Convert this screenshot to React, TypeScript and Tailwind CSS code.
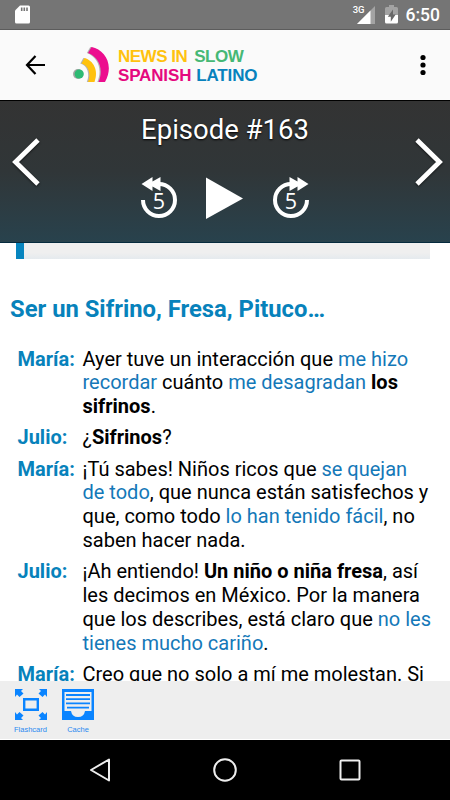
import type { ReactNode } from "react";

type Line = { speaker: string; text: ReactNode };

function Vocab({ children }: { children: ReactNode }) {
  return <span className="text-[#1478b8]">{children}</span>;
}

const DIALOG: Line[] = [
  {
    speaker: "María:",
    text: (
      <>
        Ayer tuve un interacción que <Vocab>me hizo<br />recordar</Vocab> cuánto{" "}
        <Vocab>me desagradan</Vocab> <b>los<br />sifrinos</b>.
      </>
    ),
  },
  { speaker: "Julio:", text: <>¿<b>Sifrinos</b>?</> },
  {
    speaker: "María:",
    text: (
      <>
        ¡Tú sabes! Niños ricos que <Vocab>se quejan<br />de todo</Vocab>, que nunca están satisfechos y<br />
        que, como todo <Vocab>lo han tenido fácil</Vocab>, no<br />saben hacer nada.
      </>
    ),
  },
  {
    speaker: "Julio:",
    text: (
      <>
        ¡Ah entiendo! <b>Un niño o niña fresa</b>, así<br />les decimos en México. Por la manera<br />
        que los describes, está claro que <Vocab>no les<br />tienes mucho cariño</Vocab>.
      </>
    ),
  },
  { speaker: "María:", text: <>Creo que no solo a mí me molestan. Si</> },
];

function StatusBar() {
  return (
    <div className="flex h-[30px] shrink-0 items-center border-b border-[#5c5c5c] bg-[#757575] pl-[15px] pr-[10px] text-white">
      <svg width="15" height="19" viewBox="0 0 15 19">
        <path d="M5 .5h8.5A1.5 1.5 0 0 1 15 2v15a1.5 1.5 0 0 1-1.5 1.5h-12A1.5 1.5 0 0 1 0 17V5.500z" fill="#fff" />
        <path d="M6.700 2.500v3.500M9.300 2.500v3.500M12 2.500v3.500" stroke="#757575" strokeWidth="1.600" />
      </svg>
      <span className="ml-auto mb-[9px] text-[9.500px] font-medium leading-none">3G</span>
      <svg className="-ml-[8px]" width="18" height="18" viewBox="0 0 18 18">
        <path d="M18 0v18H0z" fill="#a3a3a3" />
        <path d="M13.500 4.500V18H0z" fill="#fff" />
      </svg>
      <svg className="ml-[10px]" width="13" height="19" viewBox="0 0 13 19">
        <path d="M4 0h5v2h2.500Q13 2 13 3.500V10H0V3.500Q0 2 1.500 2H4z" fill="#a3a3a3" />
        <path d="M0 10h13v7q0 1.500-1.500 1.500h-10Q0 18.500 0 17z" fill="#fff" />
        <path d="M8 4.500 2.800 11.800h3V16.800L10.700 9.500H8z" fill="#686868" />
      </svg>
      <span className="ml-[8px] mt-[2px] text-[17.500px] font-medium leading-none">6:50</span>
    </div>
  );
}

function Logo() {
  return (
    <div className="flex">
      <svg width="38" height="38" viewBox="0 0 38 38">
        <g opacity=".35" fill="#333" transform="translate(-1.200 0)">
          <path d="M8.500 18.500 11.500 13C20.500 15.500 26 25.500 21.500 37H15C18.500 29 15.500 20.500 8.500 18.500z" />
          <path d="M15 8 18.500 2C32 4.500 41.500 20 32 37H25.500C31 24.500 26 12 15 8z" />
        </g>
        <circle cx="5" cy="29" r="5" fill="#a4a4a4" />
        <circle cx="6.200" cy="29" r="4.600" fill="#2dba73" />
        <path d="M8.500 18.500 11.500 13C20.500 15.500 26 25.500 21.500 37H15C18.500 29 15.500 20.500 8.500 18.500z" fill="#ffc20e" />
        <path d="M15 8 18.500 2C32 4.500 41.500 20 32 37H25.500C31 24.500 26 12 15 8z" fill="#ec0d8e" />
      </svg>
      <div className="ml-[7px] mt-[3.500px] whitespace-nowrap font-['Liberation_Sans'] text-[17px] font-bold leading-[18.500px]">
        <div className="tracking-[-0.5px]">
          <span className="text-[#ffc20e]">NEWS IN</span>
          <span className="ml-[7px] text-[#46b875]">SLOW</span>
        </div>
        <div className="tracking-[-0.15px]">
          <span className="text-[#e5087e]">SPANISH</span>
          <span className="ml-[5px] text-[#0782bd]">LATINO</span>
        </div>
      </div>
    </div>
  );
}

function AppBar() {
  return (
    <div className="flex h-[70px] shrink-0 items-center bg-[#fafafa] pl-[25px] pr-[24.500px]">
      <svg width="21" height="20" viewBox="0 0 21 20" fill="none" stroke="#000" strokeWidth="2.200">
        <path d="M10.500 1 2 10l8.500 9M2 10h18" />
      </svg>
      <div className="ml-[27px]">
        <Logo />
      </div>
      <svg className="ml-auto" width="6" height="22" viewBox="0 0 6 22">
        <circle cx="3" cy="3.500" r="2.600" />
        <circle cx="3" cy="11" r="2.600" />
        <circle cx="3" cy="18.500" r="2.600" />
      </svg>
    </div>
  );
}

function Skip({ forward = false }: { forward?: boolean }) {
  return (
    <svg width="38" height="44" viewBox="0 0 38 44">
      <g transform={forward ? "translate(38 0) scale(-1 1)" : undefined}>
        <path d="M3 25A16 16 0 1 0 19 9" fill="none" stroke="#fff" strokeWidth="4" />
        <path d="M1.500 9 12.500 2v4.500L20.500 2v14l-8-4.500v4.500z" fill="#fff" />
      </g>
      <text x="19" y="33.500" textAnchor="middle" fill="#fff" fontFamily="Open Sans" fontSize="21.500">5</text>
    </svg>
  );
}

function Player() {
  return (
    <div className="flex h-[143px] shrink-0 justify-between border-b border-t border-b-[#062b3e] border-t-black bg-linear-to-b from-[#333] via-[#303638] to-[#28424d] pl-[12px] pr-[7px]">
      <svg className="mt-[36px] drop-shadow-[0_1px_1px_rgba(0,0,0,0.6)]" width="28" height="50" viewBox="0 0 28 50" fill="none" stroke="#fff" strokeWidth="4.800">
        <path d="M26 3 3.500 25 26 47" />
      </svg>
      <div className="-ml-[5px] flex flex-col items-center">
        <h1 className="mt-[12px] whitespace-nowrap text-[27.500px] leading-[34px] text-white [text-shadow:0_1px_2px_#000]">Episode #163</h1>
        <div className="mt-[28px] flex items-center">
          <Skip />
          <svg className="ml-[28px] mr-[29px]" width="37" height="44" viewBox="0 0 37 44">
            <path d="M0 2.500v41.500L37 23.500z" fill="#fff" />
          </svg>
          <Skip forward />
        </div>
      </div>
      <svg className="mt-[36px] drop-shadow-[0_1px_1px_rgba(0,0,0,0.6)]" width="28" height="50" viewBox="0 0 28 50" fill="none" stroke="#fff" strokeWidth="4.800">
        <path d="M2 3 24.500 25 2 47" />
      </svg>
    </div>
  );
}

function Transcript() {
  return (
    <div className="min-h-0 flex-1 overflow-hidden bg-white">
      <div className="ml-[16px] flex h-[16px] w-[414px] bg-linear-to-b from-[#efefef] from-60% to-[#e5eaee]">
        <div className="w-[8px] bg-[#0785bf]" />
      </div>
      <h2 className="ml-[10px] mt-[35px] whitespace-nowrap text-[23.800px] font-bold leading-[30px] text-[#0782bb]">
        Ser un Sifrino, Fresa, Pituco…
      </h2>
      <div className="mt-[23.500px] flex flex-col gap-[7.500px] whitespace-nowrap text-[20px] leading-[23.800px]">
        {DIALOG.map((line, i) => (
          <div key={i} className="flex">
            <div className="ml-[17.500px] w-[65px] shrink-0 font-bold text-[#0782bb]">{line.speaker}</div>
            <p>{line.text}</p>
          </div>
        ))}
      </div>
    </div>
  );
}

function Toolbar() {
  return (
    <div className="flex h-[59px] shrink-0 gap-[15px] border-b border-white bg-[#eee] pl-[14px] pt-[8px] font-['Liberation_Sans'] text-[7.500px] leading-[9px] text-[#2b8af0]">
      <div className="flex w-[33px] flex-col items-center">
        <svg width="32" height="31" viewBox="0 0 32 31" fill="#0a84ff">
          <path d="M0 0h8L6 2l2.500 2.500L4.500 8 2 5.500 0 8zM32 0h-8l2 2-2.500 2.500 4 3.500L30 5.500 32 8zM0 31h8l-2-2 2.500-2.500-4-3.500L2 25.500 0 23zM32 31h-8l2-2-2.500-2.500 4-3.500 2.500 2.500 2-2.500z" />
          <path d="M9.200 10.200h13.600v10.600H9.200z" fill="none" stroke="#0a84ff" strokeWidth="2.400" />
        </svg>
        <span className="mt-[5px]">Flashcard</span>
      </div>
      <div className="flex w-[32px] flex-col items-center">
        <svg width="32" height="31" viewBox="0 0 32 31">
          <path d="M0 0h32v31H0z" fill="#0a84ff" />
          <path d="M2.500 22V3h27v19h-6.500q-1 6-7 6t-7-6z" fill="#eee" />
          <path d="M4 6h24M4 10.200h24M4 14.400h24M5 18.600h22" stroke="#0a84ff" strokeWidth="1.800" />
        </svg>
        <span className="mt-[5px]">Cache</span>
      </div>
    </div>
  );
}

function NavBar() {
  return (
    <div className="flex h-[60px] shrink-0 items-center justify-between bg-black pl-[89px] pr-[88px]">
      <svg width="22" height="24" viewBox="0 0 22 24" fill="none" stroke="#eee" strokeWidth="2" strokeLinejoin="round">
        <path d="M20 1.500v21L2 12z" />
      </svg>
      <svg width="24" height="24" viewBox="0 0 24 24" fill="none" stroke="#eee" strokeWidth="2">
        <circle cx="12" cy="12" r="10.800" />
      </svg>
      <svg width="24" height="24" viewBox="0 0 24 24" fill="none" stroke="#eee" strokeWidth="2">
        <rect x="2.500" y="2.500" width="19" height="19" rx="1" />
      </svg>
    </div>
  );
}

export default function App() {
  return (
    <div className="flex h-[800px] w-[450px] flex-col overflow-hidden bg-white font-['Roboto',sans-serif] text-black">
      <StatusBar />
      <AppBar />
      <Player />
      <Transcript />
      <Toolbar />
      <NavBar />
    </div>
  );
}
